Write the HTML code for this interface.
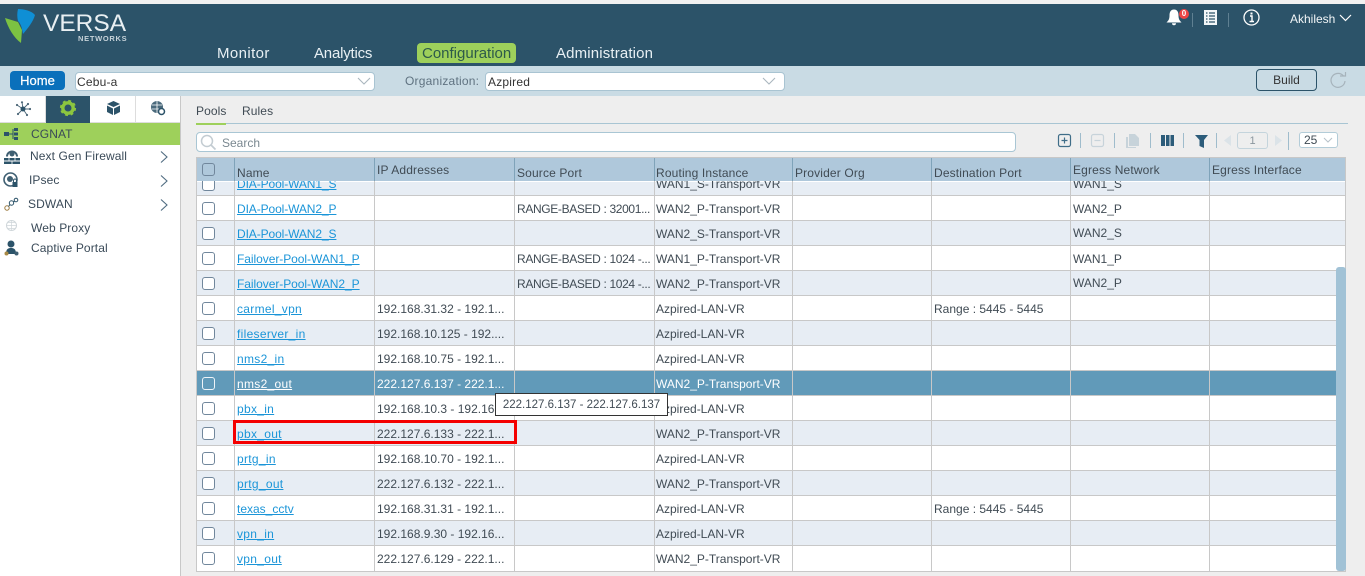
<!DOCTYPE html>
<html><head><meta charset="utf-8"><style>
html,body{margin:0;padding:0;width:1365px;height:576px;overflow:hidden;background:#eee;font-family:"Liberation Sans",sans-serif;color:#404b54}
.a{position:absolute;white-space:nowrap}
.t{font-size:12px;line-height:16px}
.h{letter-spacing:.15px}
.rg{letter-spacing:-.35px}
.l{letter-spacing:.3px}
.nav{font-size:15px;color:#e8f0f4;top:45px;line-height:18px}
a{color:#1b95d8;text-decoration:underline}
.hl{position:absolute;background:#c8c8c8}
.cb{position:absolute;left:202px;width:11px;height:11px;border:1.5px solid #71879c;border-radius:3px;background:#fff}
.side{font-size:12px;letter-spacing:.1px;color:#3a4a58;line-height:16px}
</style></head><body>
<div class="a" style="left:0;top:0;width:1365px;height:4px;background:#f1f1f1"></div>
<div class="a" style="left:0;top:4px;width:1365px;height:62px;background:#2c5369"></div>
<div class="a" style="left:0;top:66px;width:1365px;height:30px;background:#c9dbe4"></div>

<svg class="a" style="left:4px;top:8px" width="34" height="36" viewBox="0 0 34 36"><path d="M1 10L14 14L18 22L17 35C10 30 4 20 1 10Z" fill="#7cc242"/><path d="M14 1C20 1 28 3 31 7C29 14 24 20 19 26C18 20 17 16 14 13C13 9 13 5 14 1Z" fill="#0f8fd5"/></svg>
<div class="a" style="left:43px;top:12px;font-size:24.500px;line-height:24px;color:#e9eff2">VERSA</div>
<div class="a" style="left:78px;top:35px;font-size:7.500px;line-height:8px;font-weight:bold;color:#c6d2d9;letter-spacing:.7px">NETWORKS</div>

<div class="a nav" style="left:217px;letter-spacing:.4px">Monitor</div>
<div class="a nav" style="left:314px;letter-spacing:-.2px">Analytics</div>
<div class="a" style="left:417px;top:43px;width:99px;height:20px;background:#9ed05b;border-radius:4px"></div>
<div class="a nav" style="left:422px;color:#2d5a4a">Configuration</div>
<div class="a nav" style="left:556px;letter-spacing:.15px">Administration</div>

<svg class="a" style="left:1166px;top:9px" width="16" height="17" viewBox="0 0 16 17"><path d="M8 0.500C4.500 0.500 3.500 3.500 3.500 6.500C3.500 10 2.500 11.500 0.500 13.500H15.500C13.500 11.500 12.500 10 12.500 6.500C12.500 3.500 11.500 0.500 8 0.500ZM6 14.200A2 2 0 0 0 10 14.200Z" fill="#fff"/></svg>
<div class="a" style="left:1179px;top:9px;width:10px;height:10px;border-radius:5px;background:#ee4444;color:#fff;font-size:8px;line-height:10px;text-align:center;font-weight:bold">0</div>
<div class="a" style="left:1192px;top:13px;width:1px;height:14px;background:#5f8092"></div>
<svg class="a" style="left:1204px;top:10px" width="13" height="15" viewBox="0 0 13 15"><rect x="0" y="0" width="13" height="15" fill="#f2f6f8"/><path d="M2 3H3.500M5 3H11M2 6H3.500M5 6H11M2 9H3.500M5 9H11M2 12H3.500M5 12H11" stroke="#2c5369" stroke-width="1.200"/></svg>
<div class="a" style="left:1228px;top:13px;width:1px;height:14px;background:#5f8092"></div>
<svg class="a" style="left:1243px;top:9px" width="17" height="17" viewBox="0 0 17 17"><circle cx="8.500" cy="8.500" r="7.500" fill="none" stroke="#fff" stroke-width="1.300"/><path d="M7 7H9V12.500M6.500 12.500H11" fill="none" stroke="#fff" stroke-width="1.400"/><rect x="7.500" y="3.500" width="2" height="2" fill="#fff"/></svg>
<div class="a" style="left:1290px;top:11px;font-size:12px;line-height:16px;color:#f2f6f8">Akhilesh</div>
<svg class="a" style="left:1339px;top:14px" width="13" height="8" viewBox="0 0 13 8"><path d="M1 1L6.500 6.500L12 1" fill="none" stroke="#fff" stroke-width="1.200"/></svg>

<div class="a" style="left:10px;top:71px;width:55px;height:19px;background:#0a70bb;border-radius:4px;color:#fff;font-size:13px;line-height:20px;text-align:center;-webkit-text-stroke:.25px #fff">Home</div>
<div class="a t" style="left:75px;top:72px;width:298px;height:17px;background:#fff;border:1px solid #a9c4d2;border-radius:4px;line-height:18px;text-indent:1px;letter-spacing:.2px;color:#333">Cebu-a</div>
<svg class="a" style="left:357px;top:77px" width="14" height="8" viewBox="0 0 14 8"><path d="M1 1L7 7L13 1" fill="none" stroke="#a9b6bf" stroke-width="1.100"/></svg>
<div class="a t" style="left:405px;top:73px;color:#5f7280;letter-spacing:.22px">Organization:</div>
<div class="a t" style="left:485px;top:72px;width:298px;height:17px;background:#fff;border:1px solid #a9c4d2;border-radius:4px;line-height:18px;text-indent:2px;letter-spacing:.2px;color:#333">Azpired</div>
<svg class="a" style="left:762px;top:77px" width="14" height="8" viewBox="0 0 14 8"><path d="M1 1L7 7L13 1" fill="none" stroke="#a9b6bf" stroke-width="1.100"/></svg>
<div class="a t" style="left:1256px;top:69px;width:59px;height:20px;border:1px solid #2c5369;border-radius:4px;line-height:21px;text-align:center;color:#333">Build</div>
<svg class="a" style="left:1329px;top:71px" width="19" height="19" viewBox="0 0 19 19"><path d="M14.500 5A7 7 0 1 0 16 10" fill="none" stroke="#a6b3bb" stroke-width="1.200"/><path d="M11 5H16.500V1" fill="none" stroke="#a6b3bb" stroke-width="1.200"/></svg>

<!-- sidebar -->
<div class="a" style="left:0;top:96px;width:180px;height:480px;background:#fff;border-right:1px solid #c8c8c8"></div>
<div class="a" style="left:46px;top:96px;width:44px;height:27px;background:#2c5369"></div>
<div class="a" style="left:45px;top:96px;width:1px;height:27px;background:#ddd"></div>
<div class="a" style="left:135px;top:96px;width:1px;height:27px;background:#ddd"></div>
<div class="a" style="left:0;top:122px;width:46px;height:1px;background:#ddd"></div>
<div class="a" style="left:90px;top:122px;width:90px;height:1px;background:#ddd"></div>
<svg class="a" style="left:15px;top:101px" width="16" height="16" viewBox="0 0 16 16"><path d="M8 8L2 4M8 8L13 3M8 8L15 8M8 8L12 14M8 8L3 13M8 8L7 1" stroke="#4d6879" stroke-width=".9"/><circle cx="8" cy="8" r="2.500" fill="#2c5369"/><circle cx="2" cy="4" r="1.100" fill="#4d6879"/><circle cx="13" cy="3" r="1.100" fill="#4d6879"/><circle cx="15" cy="8" r="1.100" fill="#4d6879"/><circle cx="12" cy="14" r="1.100" fill="#4d6879"/><circle cx="3" cy="13" r="1.100" fill="#4d6879"/><circle cx="7" cy="1.300" r="1.100" fill="#4d6879"/></svg>
<svg class="a" style="left:59px;top:99px" width="18" height="18" viewBox="0 0 18 18"><circle cx="9" cy="9" r="5.200" fill="none" stroke="#8cc63f" stroke-width="3.400"/><circle cx="9" cy="9" r="7" fill="none" stroke="#8cc63f" stroke-width="2.200" stroke-dasharray="2.800 2.700"/></svg>
<svg class="a" style="left:106px;top:100px" width="15" height="16" viewBox="0 0 15 16"><path d="M7.500 1L14 4L7.500 7L1 4Z" fill="#2c5369"/><path d="M1 5.500L7 8.500V15L1 12Z" fill="#2c5369"/><path d="M14 5.500L8 8.500V15L14 12Z" fill="#2c5369"/></svg>
<svg class="a" style="left:150px;top:100px" width="16" height="16" viewBox="0 0 16 16"><circle cx="7" cy="7" r="6" fill="#4b6a7c"/><path d="M2 5H12M2 9H9M7 1V13" stroke="#fff" stroke-width=".8"/><circle cx="11.500" cy="11.500" r="3" fill="#fff" stroke="#2c5369" stroke-width="1.500"/></svg>

<div class="a" style="left:0;top:123px;width:180px;height:22px;background:#9ed05b"></div>
<svg class="a" style="left:4px;top:127px" width="15" height="14" viewBox="0 0 15 14"><rect x="0" y="5" width="5" height="4" fill="#2c5369"/><path d="M5 7H9M9 2V12" stroke="#2c5369"/><path d="M10 1H14V4H10ZM10 5.500H14V8.500H10ZM10 10H14V13H10Z" fill="#2c5369"/></svg>
<div class="a side" style="left:31px;top:126px">CGNAT</div>

<svg class="a" style="left:3px;top:148px" width="18" height="17" viewBox="0 0 18 17"><path d="M4 8.500A5 5 0 0 1 14 8.500" fill="none" stroke="#3f5f72" stroke-width="2"/><circle cx="9" cy="6" r="2.500" fill="#3f5f72"/><path d="M1 10H17V12.500H1ZM1 13.500H17V16H1Z" fill="#2c5369"/><path d="M6 10V12.500M12 10V12.500M9 13.500V16" stroke="#fff" stroke-width=".8"/></svg>
<div class="a side" style="left:30px;top:148px">Next Gen Firewall</div>
<svg class="a" style="left:160px;top:151px" width="8" height="12" viewBox="0 0 8 12"><path d="M1 .5L7 6L1 11.500" fill="none" stroke="#4f6b80" stroke-width="1.100"/></svg>

<svg class="a" style="left:3px;top:172px" width="17" height="17" viewBox="0 0 17 17"><circle cx="7.500" cy="7.500" r="6.500" fill="none" stroke="#3f5f72" stroke-width="1.600"/><circle cx="7" cy="7" r="3" fill="#3f5f72"/><path d="M10.500 10V8.500A1.500 1.500 0 0 1 13.500 8.500V10" fill="none" stroke="#2c5369"/><rect x="9.500" y="10" width="5" height="5" fill="#2c5369"/></svg>
<div class="a side" style="left:29px;top:172px">IPsec</div>
<svg class="a" style="left:160px;top:175px" width="8" height="12" viewBox="0 0 8 12"><path d="M1 .5L7 6L1 11.500" fill="none" stroke="#4f6b80" stroke-width="1.100"/></svg>

<svg class="a" style="left:4px;top:197px" width="15" height="15" viewBox="0 0 15 15"><circle cx="3" cy="11" r="2.200" fill="none" stroke="#9b7a3f"/><circle cx="7.500" cy="6" r="2.200" fill="none" stroke="#2c5369"/><circle cx="12" cy="3" r="1.800" fill="none" stroke="#2c5369"/><path d="M4.500 9.500L6 7.500M9.500 5L10.500 4" stroke="#2c5369"/></svg>
<div class="a side" style="left:28px;top:196px">SDWAN</div>
<svg class="a" style="left:160px;top:199px" width="8" height="12" viewBox="0 0 8 12"><path d="M1 .5L7 6L1 11.500" fill="none" stroke="#4f6b80" stroke-width="1.100"/></svg>

<svg class="a" style="left:5px;top:219px" width="13" height="13" viewBox="0 0 13 13"><circle cx="6.500" cy="6.500" r="5" fill="none" stroke="#cfd6da"/><path d="M1.500 6.500H11.500M6.500 1.500V11.500M2.500 3.500H10.500M2.500 9.500H10.500" stroke="#cfd6da" stroke-width=".7"/></svg>
<div class="a side" style="left:31px;top:220px">Web Proxy</div>
<svg class="a" style="left:4px;top:240px" width="15" height="16" viewBox="0 0 15 16"><circle cx="7" cy="4" r="3.500" fill="#2c5369"/><path d="M2 14C2 9 4 8 7 8C10 8 12 9 12 14Z" fill="#2c5369"/><circle cx="2.500" cy="13.500" r="2" fill="#a98a45"/><circle cx="12.500" cy="13.500" r="2" fill="#3f5f72"/></svg>
<div class="a side" style="left:31px;top:240px">Captive Portal</div>

<!-- tabs -->
<div class="a t" style="left:196px;top:103px;letter-spacing:.1px">Pools</div>
<div class="a t" style="left:242px;top:103px;letter-spacing:.1px">Rules</div>
<div class="a" style="left:196px;top:123px;width:1152px;height:1px;background:#a8c5d3"></div>
<div class="a" style="left:196px;top:123px;width:30px;height:2px;background:#9ed05b"></div>

<div class="a" style="left:196px;top:132px;width:818px;height:18px;background:#fff;border:1px solid #a9c6d4;border-radius:4px"></div>
<svg class="a" style="left:200px;top:134px" width="17" height="17" viewBox="0 0 17 17"><circle cx="7" cy="7" r="5.500" fill="none" stroke="#c3ccd2" stroke-width="1.500"/><path d="M11 11L15.500 15.500" stroke="#c3ccd2" stroke-width="1.700"/></svg>
<div class="a t" style="left:222px;top:135px;color:#7a8890">Search</div>

<!-- toolbar -->
<svg class="a" style="left:1056px;top:131px" width="290" height="20" viewBox="0 0 290 20">
<rect x="2.500" y="3.500" width="12" height="12" rx="2" fill="none" stroke="#3f6d88" stroke-width="1.200"/><path d="M5.500 9.500H11.500M8.500 6.500V12.500" stroke="#3f6d88" stroke-width="1.200"/>
<path d="M24.500 2V17M58.500 2V17M94.500 2V17M127.500 2V17M160.500 2V17M232.500 1V19" stroke="#9fbccc"/>
<rect x="35.500" y="3.500" width="12" height="12" rx="2" fill="none" stroke="#c7d3da" stroke-width="1.200"/><path d="M38.500 9.500H44.500" stroke="#c7d3da" stroke-width="1.200"/>
<path d="M73 3H79L83 7V15H73Z" fill="#c7d3da"/><path d="M70 6H72V16H80V17H70Z" fill="#c7d3da"/>
<path d="M105 4H109V15H105ZM110 4H113.500V15H110ZM114.500 4H118V15H114.500Z" fill="#2c5c7a"/>
<path d="M139 4H152L148 9V17L143.500 15V9Z" fill="#2c5c7a"/>
<path d="M175 4V15L168 9.500Z" fill="#dbe3e8"/><path d="M219 4V15L226 9.500Z" fill="#dbe3e8"/>
</svg>
<div class="a t" style="left:1237px;top:132px;width:29px;height:15px;border:1px solid #c4d4dc;border-radius:3px;text-align:center;color:#8b979e;font-size:11px;line-height:16px">1</div>
<div class="a t" style="left:1299px;top:132px;width:37px;height:14px;background:#fff;border:1px solid #b3ccd8;border-radius:3px;font-size:12px;line-height:15px;text-indent:4px">25</div>
<svg class="a" style="left:1323px;top:137px" width="10" height="6" viewBox="0 0 10 6"><path d="M1 1L5 5L9 1" fill="none" stroke="#b6c1c8"/></svg>

<!-- table -->
<div class="a" style="left:196px;top:157px;width:1150px;height:415px;background:#fff;border:1px solid #c8c8c8;box-sizing:border-box;overflow:hidden">
<div class="a" style="left:0;top:24px;width:1150px;height:14px;background:#e7edf4"></div>
<div class="a" style="left:0;top:63px;width:1150px;height:25px;background:#e7edf4"></div>
<div class="a" style="left:0;top:113px;width:1150px;height:25px;background:#e7edf4"></div>
<div class="a" style="left:0;top:163px;width:1150px;height:25px;background:#e7edf4"></div>
<div class="a" style="left:0;top:213px;width:1150px;height:25px;background:#619ab9"></div>
<div class="a" style="left:0;top:263px;width:1150px;height:25px;background:#e7edf4"></div>
<div class="a" style="left:0;top:313px;width:1150px;height:25px;background:#e7edf4"></div>
<div class="a" style="left:0;top:363px;width:1150px;height:25px;background:#e7edf4"></div>
</div>
<div class="hl" style="left:197px;top:195px;width:1148px;height:1px"></div>
<div class="hl" style="left:197px;top:220px;width:1148px;height:1px"></div>
<div class="hl" style="left:197px;top:245px;width:1148px;height:1px"></div>
<div class="hl" style="left:197px;top:270px;width:1148px;height:1px"></div>
<div class="hl" style="left:197px;top:295px;width:1148px;height:1px"></div>
<div class="hl" style="left:197px;top:320px;width:1148px;height:1px"></div>
<div class="hl" style="left:197px;top:345px;width:1148px;height:1px"></div>
<div class="hl" style="left:197px;top:370px;width:1148px;height:1px"></div>
<div class="hl" style="left:197px;top:395px;width:1148px;height:1px"></div>
<div class="hl" style="left:197px;top:420px;width:1148px;height:1px"></div>
<div class="hl" style="left:197px;top:445px;width:1148px;height:1px"></div>
<div class="hl" style="left:197px;top:470px;width:1148px;height:1px"></div>
<div class="hl" style="left:197px;top:495px;width:1148px;height:1px"></div>
<div class="hl" style="left:197px;top:520px;width:1148px;height:1px"></div>
<div class="hl" style="left:197px;top:545px;width:1148px;height:1px"></div>
<div class="hl" style="left:234px;top:181px;width:1px;height:390px"></div>
<div class="hl" style="left:374px;top:181px;width:1px;height:390px"></div>
<div class="hl" style="left:514px;top:181px;width:1px;height:390px"></div>
<div class="hl" style="left:654px;top:181px;width:1px;height:390px"></div>
<div class="hl" style="left:792px;top:181px;width:1px;height:390px"></div>
<div class="hl" style="left:931px;top:181px;width:1px;height:390px"></div>
<div class="hl" style="left:1070px;top:181px;width:1px;height:390px"></div>
<div class="hl" style="left:1209px;top:181px;width:1px;height:390px"></div>

<div class="cb" style="top:178px"></div>
<div class="cb" style="top:202px"></div><div class="cb" style="top:227px"></div><div class="cb" style="top:252px"></div><div class="cb" style="top:277px"></div><div class="cb" style="top:302px"></div><div class="cb" style="top:327px"></div><div class="cb" style="top:352px"></div><div class="cb" style="top:377px;background:#619ab9;border-color:#eef4f8"></div><div class="cb" style="top:402px"></div><div class="cb" style="top:427px"></div><div class="cb" style="top:452px"></div><div class="cb" style="top:477px"></div><div class="cb" style="top:502px"></div><div class="cb" style="top:527px"></div><div class="cb" style="top:552px"></div>

<div class="a" style="left:0;top:1px;width:1365px;height:570px">
<div class="a t" style="left:237px;top:175px;letter-spacing:-.1px"><a>DIA-Pool-WAN1_S</a></div>
<div class="a t" style="left:656px;top:175px">WAN1_S-Transport-VR</div>
<div class="a t" style="left:1073px;top:175px">WAN1_S</div>

<div class="a t" style="left:237px;top:200px;letter-spacing:-.1px"><a>DIA-Pool-WAN2_P</a></div>
<div class="a t rg" style="left:517px;top:200px">RANGE-BASED : 32001...</div>
<div class="a t" style="left:656px;top:200px">WAN2_P-Transport-VR</div>
<div class="a t" style="left:1073px;top:200px">WAN2_P</div>

<div class="a t" style="left:237px;top:225px;letter-spacing:-.1px"><a>DIA-Pool-WAN2_S</a></div>
<div class="a t" style="left:656px;top:225px">WAN2_S-Transport-VR</div>
<div class="a t" style="left:1073px;top:224px">WAN2_S</div>

<div class="a t" style="left:237px;top:250px;letter-spacing:-.05px"><a>Failover-Pool-WAN1_P</a></div>
<div class="a t rg" style="left:517px;top:250px">RANGE-BASED : 1024 -...</div>
<div class="a t" style="left:656px;top:250px">WAN1_P-Transport-VR</div>
<div class="a t" style="left:1073px;top:250px">WAN1_P</div>

<div class="a t" style="left:237px;top:275px;letter-spacing:-.05px"><a>Failover-Pool-WAN2_P</a></div>
<div class="a t rg" style="left:517px;top:275px">RANGE-BASED : 1024 -...</div>
<div class="a t" style="left:656px;top:275px">WAN2_P-Transport-VR</div>
<div class="a t" style="left:1073px;top:274px">WAN2_P</div>

<div class="a t l" style="left:237px;top:300px"><a>carmel_vpn</a></div>
<div class="a t" style="left:377px;top:300px">192.168.31.32 - 192.1...</div>
<div class="a t" style="left:656px;top:300px">Azpired-LAN-VR</div>
<div class="a t" style="left:934px;top:300px">Range : 5445 - 5445</div>

<div class="a t l" style="left:237px;top:325px"><a>fileserver_in</a></div>
<div class="a t" style="left:377px;top:325px">192.168.10.125 - 192....</div>
<div class="a t" style="left:656px;top:325px">Azpired-LAN-VR</div>

<div class="a t l" style="left:237px;top:350px"><a>nms2_in</a></div>
<div class="a t" style="left:377px;top:350px">192.168.10.75 - 192.1...</div>
<div class="a t" style="left:656px;top:350px">Azpired-LAN-VR</div>

<div class="a t l" style="left:237px;top:375px"><a style="color:#fff">nms2_out</a></div>
<div class="a t" style="left:377px;top:375px;color:#fff">222.127.6.137 - 222.1...</div>
<div class="a t" style="left:656px;top:375px;color:#fff">WAN2_P-Transport-VR</div>

<div class="a t l" style="left:237px;top:400px"><a>pbx_in</a></div>
<div class="a t" style="left:377px;top:400px">192.168.10.3 - 192.168.10.3</div>
<div class="a t" style="left:656px;top:400px">Azpired-LAN-VR</div>

<div class="a t l" style="left:237px;top:425px"><a>pbx_out</a></div>
<div class="a t" style="left:377px;top:425px">222.127.6.133 - 222.1...</div>
<div class="a t" style="left:656px;top:425px">WAN2_P-Transport-VR</div>

<div class="a t l" style="left:237px;top:450px"><a>prtg_in</a></div>
<div class="a t" style="left:377px;top:450px">192.168.10.70 - 192.1...</div>
<div class="a t" style="left:656px;top:450px">Azpired-LAN-VR</div>

<div class="a t l" style="left:237px;top:475px"><a>prtg_out</a></div>
<div class="a t" style="left:377px;top:475px">222.127.6.132 - 222.1...</div>
<div class="a t" style="left:656px;top:475px">WAN2_P-Transport-VR</div>

<div class="a t" style="left:237px;top:500px"><a>texas_cctv</a></div>
<div class="a t" style="left:377px;top:500px">192.168.31.31 - 192.1...</div>
<div class="a t" style="left:656px;top:500px">Azpired-LAN-VR</div>
<div class="a t" style="left:934px;top:500px">Range : 5445 - 5445</div>

<div class="a t l" style="left:237px;top:525px"><a>vpn_in</a></div>
<div class="a t" style="left:377px;top:525px">192.168.9.30 - 192.16...</div>
<div class="a t" style="left:656px;top:525px">Azpired-LAN-VR</div>

<div class="a t l" style="left:237px;top:550px"><a>vpn_out</a></div>
<div class="a t" style="left:377px;top:550px">222.127.6.129 - 222.1...</div>
<div class="a t" style="left:656px;top:550px">WAN2_P-Transport-VR</div>
</div>

<!-- header -->
<div class="a" style="left:197px;top:158px;width:1148px;height:23px;background:#afc8db"></div>
<div class="cb" style="top:163px;background:#afc8db"></div>
<div class="hl" style="left:234px;top:158px;width:1px;height:23px;background:#7fa3b9"></div>
<div class="hl" style="left:374px;top:158px;width:1px;height:23px;background:#7fa3b9"></div>
<div class="hl" style="left:514px;top:158px;width:1px;height:23px;background:#7fa3b9"></div>
<div class="hl" style="left:654px;top:158px;width:1px;height:23px;background:#7fa3b9"></div>
<div class="hl" style="left:792px;top:158px;width:1px;height:23px;background:#7fa3b9"></div>
<div class="hl" style="left:931px;top:158px;width:1px;height:23px;background:#7fa3b9"></div>
<div class="hl" style="left:1070px;top:158px;width:1px;height:23px;background:#7fa3b9"></div>
<div class="hl" style="left:1209px;top:158px;width:1px;height:23px;background:#7fa3b9"></div>
<div class="a t h" style="left:237px;top:165px">Name</div>
<div class="a t h" style="left:377px;top:162px">IP Addresses</div>
<div class="a t h" style="left:517px;top:165px">Source Port</div>
<div class="a t h" style="left:656px;top:165px">Routing Instance</div>
<div class="a t h" style="left:795px;top:165px">Provider Org</div>
<div class="a t h" style="left:934px;top:165px">Destination Port</div>
<div class="a t h" style="left:1073px;top:162px">Egress Network</div>
<div class="a t h" style="left:1212px;top:162px">Egress Interface</div>

<!-- scrollbar -->
<div class="a" style="left:1336px;top:267px;width:10px;height:304px;background:#a1c2d6;border-radius:3px"></div>

<!-- tooltip -->
<div class="a t" style="left:495px;top:393px;width:171px;height:21px;background:#fff;border:1px solid #333;line-height:23px;text-align:center;font-size:11.500px">222.127.6.137 - 222.127.6.137</div>

<!-- highlight box -->
<div class="a" style="left:233px;top:420px;width:278px;height:18px;border:3px solid #f40000"></div>
</body></html>
